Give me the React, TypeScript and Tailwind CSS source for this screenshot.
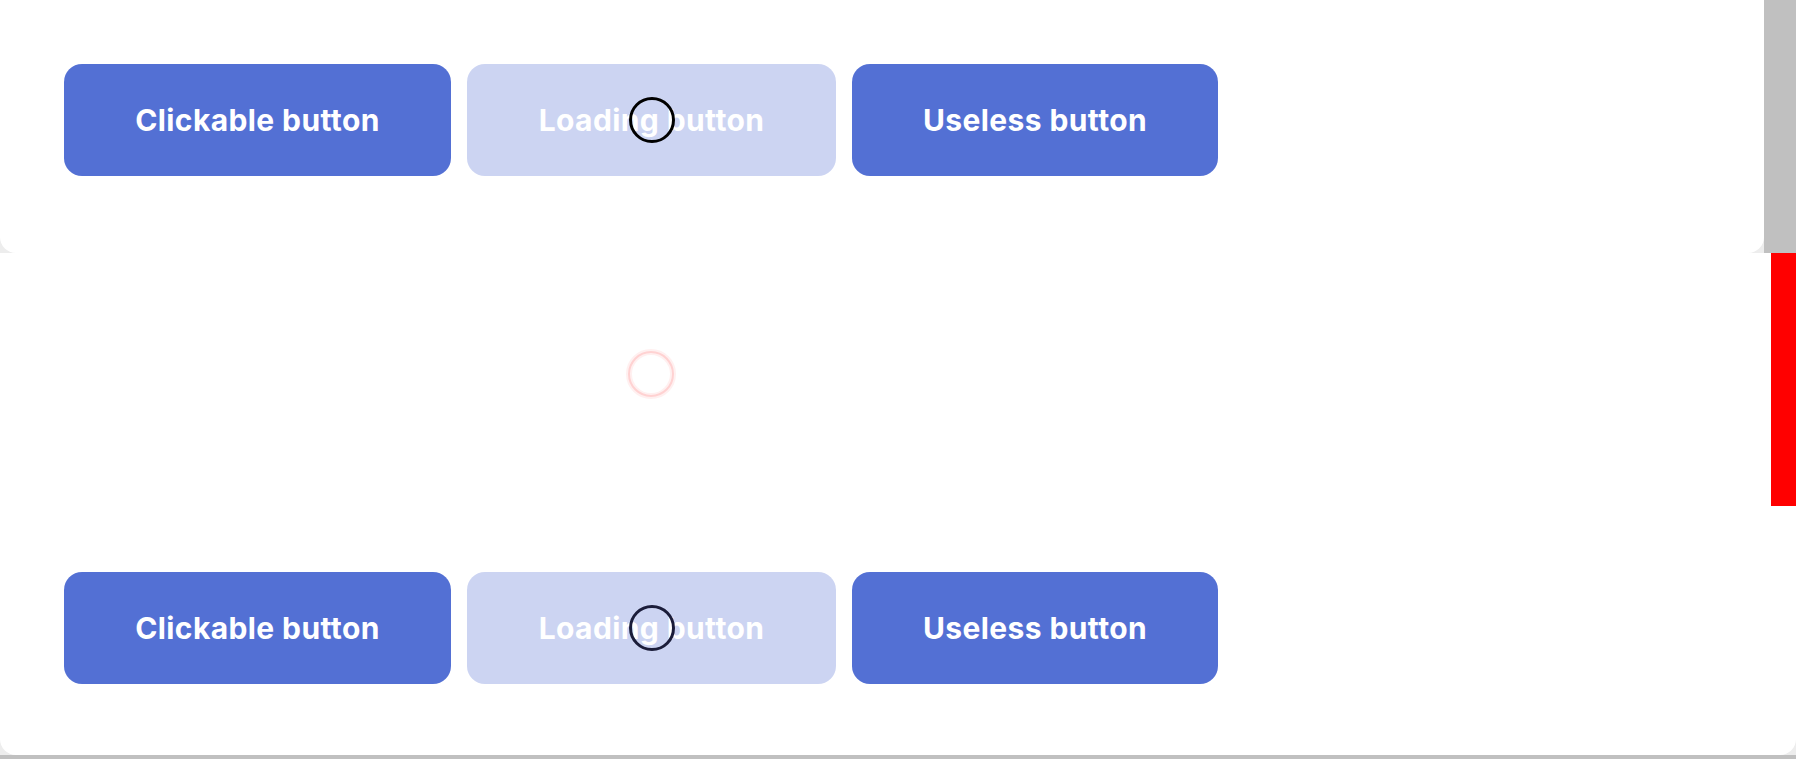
import React from "react";

function Spinner({ color }: { color: string }) {
  return (
    <span className="pointer-events-none absolute left-1/2 top-1/2 -translate-x-1/2 -translate-y-1/2">
      <svg width="47" height="47" viewBox="0 0 47 47">
        <circle cx="23.5" cy="23.5" r="21.5" fill="none" stroke={color} strokeWidth="3" />
      </svg>
    </span>
  );
}

function ButtonRow({ spinnerColor }: { spinnerColor: string }) {
  return (
    <div className="flex gap-4">
      <button className="flex h-[112px] w-[387px] items-center justify-center rounded-[18px] bg-[#5370d4] text-[30px] font-bold tracking-[0.4px] text-white">
        Clickable button
      </button>
      <button className="relative flex h-[112px] w-[369px] items-center justify-center rounded-[18px] bg-[#ccd4f2] text-[30px] font-bold tracking-[0.4px] text-white">
        Loading button
        <Spinner color={spinnerColor} />
      </button>
      <button className="flex h-[112px] w-[366px] items-center justify-center rounded-[18px] bg-[#5370d4] text-[30px] font-bold tracking-[0.4px] text-white">
        Useless button
      </button>
    </div>
  );
}

export default function App() {
  return (
    <div
      className="flex h-[759px] w-[1796px] flex-col overflow-hidden bg-white"
      style={{ fontFamily: "Inter, 'Noto Sans', sans-serif" }}
    >
      <div className="flex h-[253px] bg-[#ededed]">
        <div className="flex-1 rounded-b-2xl bg-white pl-16 pt-16">
          <ButtonRow spinnerColor="#000000" />
        </div>
        <div className="w-[32px] bg-[#c0c0c0]" />
      </div>
      <div className="flex-1 bg-[#ededed]">
        <div className="relative h-[502px] rounded-b-2xl bg-white pl-16">
          <div className="pl-[562px] pt-[96px]">
            <svg width="50" height="50" viewBox="0 0 50 50">
              <circle cx="25" cy="25" r="22" fill="none" stroke="#fff0f0" strokeWidth="6" />
              <circle cx="25" cy="25" r="22" fill="none" stroke="#ffd2d2" strokeWidth="2" />
            </svg>
          </div>
          <div className="mt-[173px]">
            <ButtonRow spinnerColor="#1b1d3a" />
          </div>
          <div className="absolute right-0 top-0 h-[253px] w-[25px] bg-[#ff0000]" />
        </div>
        <div className="h-[4px] bg-[#c0c0c0]" />
      </div>
    </div>
  );
}
